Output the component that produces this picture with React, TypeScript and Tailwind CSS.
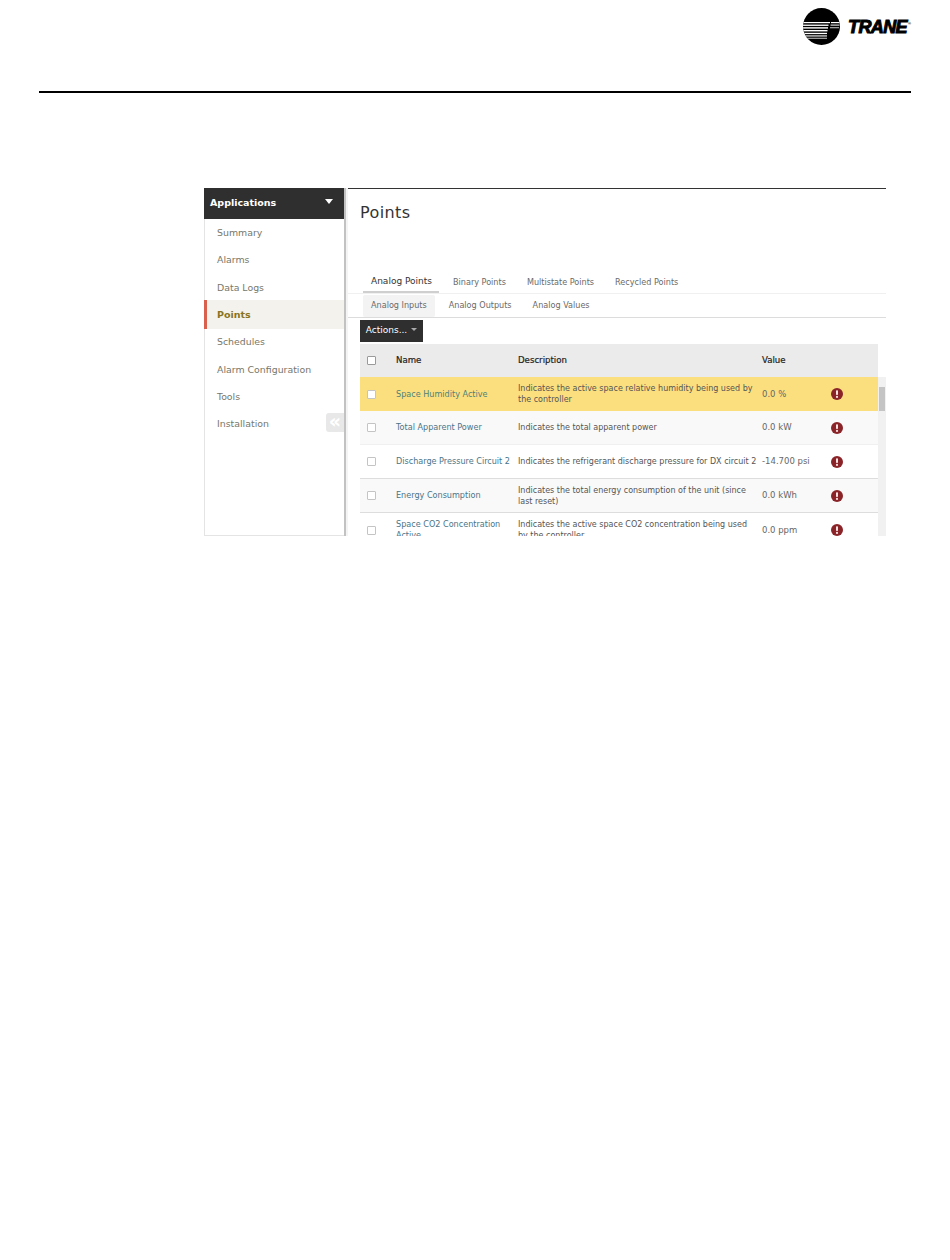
const sidebarItems = ["Summary", "Alarms", "Data Logs", "Points", "Schedules", "Alarm Configuration", "Tools", "Installation"];
const rows = [
  { name: ["Space Humidity Active"], desc: ["Indicates the active space relative humidity being used by", "the controller"], value: "0.0 %", bg: "bg-[#fbdf7f]", border: "", nameColor: "text-[#4f7f78]" },
  { name: ["Total Apparent Power"], desc: ["Indicates the total apparent power"], value: "0.0 kW", bg: "bg-[#f9f9f9]", border: "border-b border-[#f0f0f0]", nameColor: "text-[#4a7488]" },
  { name: ["Discharge Pressure Circuit 2"], desc: ["Indicates the refrigerant discharge pressure for DX circuit 2"], value: "-14.700 psi", bg: "bg-white", border: "border-b border-[#dddddd]", nameColor: "text-[#4a7488]" },
  { name: ["Energy Consumption"], desc: ["Indicates the total energy consumption of the unit (since", "last reset)"], value: "0.0 kWh", bg: "bg-[#f9f9f9]", border: "border-b border-[#dddddd]", nameColor: "text-[#4a7488]" },
  { name: ["Space CO2 Concentration", "Active"], desc: ["Indicates the active space CO2 concentration being used", "by the controller"], value: "0.0 ppm", bg: "bg-white", border: "", nameColor: "text-[#4a7488]" },
];

function Logo() {
  return (
    <div className="flex items-start gap-[8px]">
      <svg width="37" height="37" viewBox="0 0 37 37">
        <defs>
          <clipPath id="trane-disc">
            <circle cx="18.5" cy="18.5" r="18.5" />
          </clipPath>
        </defs>
        <circle cx="18.5" cy="18.5" r="18.5" fill="#000" />
        <g clipPath="url(#trane-disc)" fill="#fff">
          <rect x="0" y="14" width="27" height="1.2" />
          <rect x="28" y="14" width="9" height="1.2" />
          <rect x="0" y="16.6" width="25.5" height="1.3" />
          <rect x="27.5" y="16.6" width="9" height="1" />
          <rect x="0" y="19.2" width="25" height="1.4" />
          <rect x="27" y="19.4" width="9" height="0.8" />
          <rect x="0" y="22" width="24.5" height="1.4" />
          <rect x="0" y="24.8" width="24" height="1.3" />
          <rect x="0" y="27.4" width="24" height="1.1" />
          <rect x="0" y="29.8" width="24" height="0.8" />
        </g>
      </svg>
      <div className="mt-[10px] w-[62px] font-['Liberation_Sans',sans-serif] text-[18px] leading-[18px] font-bold tracking-[-0.6px] whitespace-nowrap text-black italic [-webkit-text-stroke:1px_#000]">
        TRANE<span className="relative -top-[8px] left-[1px] text-[4px] tracking-normal [-webkit-text-stroke:0]">®</span>
      </div>
    </div>
  );
}

function Alert() {
  return (
    <svg width="12" height="12" viewBox="0 0 12 12">
      <circle cx="6" cy="6" r="6" fill="#8a2428" />
      <rect x="5" y="2.2" width="2" height="4.8" rx="0.8" fill="#f4e3e3" />
      <circle cx="6" cy="8.9" r="1.1" fill="#f4e3e3" />
    </svg>
  );
}

function Check({ light = false }: { light?: boolean }) {
  return <div className={`h-[9px] w-[9px] rounded-[1px] border ${light ? "border-[#c4c4c4] bg-white" : "border-[#9a9a9a] bg-white"}`} />;
}

export default function App() {
  return (
    <div className="h-[1260px] w-[950px] bg-white font-['DejaVu_Sans',sans-serif]">
      <header className="px-[39px]">
        <div className="flex h-[91px] items-start justify-end pt-[8px] pr-[1px]">
          <Logo />
        </div>
        <div className="h-[2px] bg-black" />
      </header>

      <div className="mt-[95px] ml-[204px] flex h-[348px] w-[682px] overflow-hidden">
        <aside className="flex w-[140px] shrink-0 flex-col">
          <div className="flex h-[31px] items-center justify-between bg-[#2f2f2f] pr-[11px] pl-[6px]">
            <span className="text-[9.5px] font-bold text-white">Applications</span>
            <span className="mb-[5px] h-0 w-0 border-x-[4.5px] border-t-[5px] border-x-transparent border-t-white" />
          </div>
          <nav className="relative flex-1 border-b border-l border-[#e4e4e4] pt-[0.5px]">
            {sidebarItems.map((item) =>
              item === "Points" ? (
                <div key={item} className="relative z-10 -mt-[1.2px] -ml-[1px] flex h-[28.5px] items-center border-l-[3px] border-[#d9604c] bg-[#f3f2ec] pt-[1px] pl-[10px] text-[9.5px] font-bold text-[#8a7420]">
                  {item}
                </div>
              ) : (
                <div key={item} className="flex h-[27.3px] items-center pl-[12px] text-[9.4px] text-[#77776a]">
                  {item}
                </div>
              ),
            )}
            <div className="absolute right-0 bottom-[103px] flex h-[19px] w-[18px] items-center justify-center rounded-l-[3px] bg-[#e8e8e8] pb-[3px] text-[19px] leading-none font-bold text-white">
              «
            </div>
          </nav>
        </aside>

        <div className="w-[4px] shrink-0 border-l-[2px] border-[#c2c2c2] bg-[#f4f4f4]" />

        <main className="flex min-w-0 flex-1 flex-col border-t border-[#333333] bg-white">
          <div className="h-[76px] pt-[14px] pl-[12px] text-[16px] leading-[20px] tracking-[0.4px] text-[#333333]">Points</div>

          <div className="flex h-[29px] items-center border-b border-[#f0f0f0] pl-[15px] text-[8.1px] text-[#6a6a6a]">
            <div className="mr-[14px] flex h-full items-center border-b-2 border-[#cfcfcf] pt-[8px] pr-[7px] pl-[8px] text-[9px] text-[#333333]">Analog Points</div>
            <div className="mr-[21px] pt-[6px]">Binary Points</div>
            <div className="mr-[21px] pt-[6px]">Multistate Points</div>
            <div className="pt-[6px]">Recycled Points</div>
          </div>

          <div className="flex h-[24px] items-center border-b border-[#dcdcdc] pl-[15px] text-[8.1px] text-[#6a6a6a]">
            <div className="mr-[14px] flex h-[22px] items-center rounded-[2px] bg-[#f3f3f3] px-[8px]">Analog Inputs</div>
            <div className="mr-[21px]">Analog Outputs</div>
            <div>Analog Values</div>
          </div>

          <div className="pt-[2px] pb-[2px] pl-[12px]">
            <div className="flex h-[22px] w-[63px] items-center justify-center gap-[4px] bg-[#2f2f2f] text-[9px] text-white">
              Actions...
              <span className="mb-[3px] h-0 w-0 border-x-[3.5px] border-t-[3.5px] border-x-transparent border-t-[#aaaaaa]" />
            </div>
          </div>

          <div className="flex min-h-0 flex-1 pl-[12px]">
            <div className="min-w-0 flex-1">
              <div className="grid h-[33px] grid-cols-[36px_122px_244px_69px_1fr] items-center bg-[#ebebeb] text-[8.6px] text-[#222222] [-webkit-text-stroke:0.2px_#222222]">
                <div className="pl-[7px]"><Check /></div>
                <div>Name</div>
                <div>Description</div>
                <div>Value</div>
                <div />
              </div>
              {rows.map((r) => (
                <div key={r.value} className={`grid h-[34px] grid-cols-[36px_122px_244px_69px_1fr] items-center text-[8.1px] leading-[11px] ${r.bg} ${r.border}`}>
                  <div className="pl-[7px]"><Check light /></div>
                  <div className={`whitespace-nowrap ${r.nameColor}`}>
                    {r.name.map((l) => <div key={l}>{l}</div>)}
                  </div>
                  <div className="text-[8px] whitespace-nowrap text-[#555555]">
                    {r.desc.map((l) => <div key={l}>{l}</div>)}
                  </div>
                  <div className="text-[8.5px] whitespace-nowrap text-[#666666]">{r.value}</div>
                  <div><Alert /></div>
                </div>
              ))}
            </div>
            <div className="mt-[33px] w-[8px] shrink-0 bg-[#f1f1f1] px-[1px] pt-[10px]">
              <div className="h-[24px] bg-[#c4c4c4]" />
            </div>
          </div>
        </main>
      </div>
    </div>
  );
}
